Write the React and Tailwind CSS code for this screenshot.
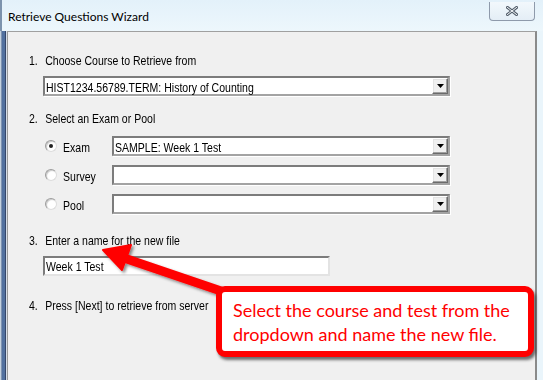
import React from "react";

const dlgFont = { fontFamily: '"Liberation Sans", Arial, sans-serif' };

function Narrow({ children, className = "" }) {
  return (
    <span
      className={"inline-block origin-left scale-x-[0.81] whitespace-nowrap text-[13px] leading-[15px] text-black " + className}
      style={dlgFont}
    >
      {children}
    </span>
  );
}

function Arrow() {
  return (
    <div className="flex h-[16px] w-[16px] shrink-0 items-center justify-center border border-t-[#ffffff] border-l-[#ffffff] border-r-[#6b6b6b] border-b-[#6b6b6b] bg-[#f0f0f0] shadow-[inset_-1px_-1px_0_#a0a0a0,inset_1px_1px_0_#e3e3e3]">
      <svg width="7" height="4" viewBox="0 0 7 4">
        <path d="M0 0H7L3.5 4Z" fill="#000" />
      </svg>
    </div>
  );
}

function Combo({ width, text }) {
  return (
    <div
      className="flex h-[20px] items-center border-2 border-t-[#7c7c7c] border-l-[#7c7c7c] border-r-[#a3a3a3] border-b-[#a3a3a3] bg-white shadow-[1px_1px_0_#ffffff]"
      style={{ width }}
    >
      <div className="min-w-0 flex-1 overflow-hidden pl-[1px]">
        <Narrow>{text}</Narrow>
      </div>
      <Arrow />
    </div>
  );
}

function Radio({ checked }) {
  return (
    <div className="flex h-[12px] w-[12px] shrink-0 items-center justify-center rounded-full border border-t-[#9c9c9c] border-l-[#9c9c9c] border-r-[#dcdcdc] border-b-[#dcdcdc] bg-white shadow-[inset_1px_1px_1px_#c8c8c8]">
      {checked && <div className="h-[4px] w-[4px] rounded-full bg-[#222]" />}
    </div>
  );
}

function Step({ n, children, className }) {
  return (
    <div className={"flex h-[14px] items-center " + className}>
      <Narrow>
        <span className="inline-block w-[20px]">{n}.</span>
        {children}
      </Narrow>
    </div>
  );
}

function RadioRow({ label, checked, text }) {
  return (
    <div className="ml-[16px] flex h-[20px] items-center">
      <Radio checked={checked} />
      <div className="ml-[6px] w-[49px]">
        <Narrow>{label}</Narrow>
      </div>
      <Combo width={338} text={text} />
    </div>
  );
}

export default function App() {
  return (
    <div className="relative flex h-[380px] w-[543px] flex-col overflow-hidden bg-[#eaf5fb]">
      {/* title bar */}
      <div className="flex h-[31px] shrink-0 items-start bg-gradient-to-b from-[#e3f1fa] to-[#edf7fc]">
        <div className="h-full w-[2px] bg-[#7d93ad]" />
        <span
          className="ml-[6px] mt-[9px] text-[12px] leading-[16px] text-black"
          style={{ fontFamily: 'Lato, "Noto Sans", sans-serif' }}
        >
          Retrieve Questions Wizard
        </span>
        <div className="ml-auto mr-[8px] mt-[2px] flex h-[19px] w-[46px] items-center justify-center rounded-b-[4px] border border-t-0 border-[#8e9aab] bg-gradient-to-b from-[#f2f8fc] to-[#e4eef6]">
          <svg width="12" height="10" viewBox="0 0 12 10">
            <path d="M1.5 1.5L10.5 8.5M10.5 1.5L1.5 8.5" stroke="#55606d" strokeWidth="3" strokeLinecap="square" />
            <path d="M1.5 1.5L10.5 8.5M10.5 1.5L1.5 8.5" stroke="#f6f9fb" strokeWidth="1" strokeLinecap="square" />
          </svg>
        </div>
      </div>

      {/* body */}
      <div className="flex min-h-0 flex-1">
        <div className="flex w-[7px] shrink-0">
          <div className="w-[1px] bg-[#c3d1df]" />
          <div className="w-[1px] bg-[#7f93b0]" />
          <div className="w-[3px] bg-[#52719f]" />
          <div className="w-[1px] bg-[#34466a]" />
          <div className="w-[1px] bg-[#d5dee8]" />
        </div>
        <div className="flex flex-1 flex-col border-l border-t border-r-2 border-l-[#9a9a9a] border-t-[#a0a0a0] border-r-[#8a8a8a] bg-[#f0f0f0] pl-[21px]">
          <Step n="1" className="mt-[21px]">Choose Course to Retrieve from</Step>
          <div className="ml-[14px] mt-[9px]">
            <Combo width={407} text="HIST1234.56789.TERM: History of Counting" />
          </div>

          <Step n="2" className="mt-[15px]">Select an Exam or Pool</Step>
          <div className="mt-[11px] flex flex-col gap-[9px]">
            <RadioRow label="Exam" checked text="SAMPLE: Week 1 Test" />
            <RadioRow label="Survey" text="" />
            <RadioRow label="Pool" text="" />
          </div>

          <Step n="3" className="mt-[19px]">Enter a name for the new file</Step>
          <div className="ml-[14px] mt-[9px] flex h-[20px] w-[287px] items-center border-2 border-t-[#7c7c7c] border-l-[#7c7c7c] border-r-[#e3e3e3] border-b-[#e3e3e3] bg-white pl-[1px]">
            <Narrow>Week 1 Test</Narrow>
          </div>

          <Step n="4" className="mt-[22px]">Press [Next] to retrieve from server</Step>
        </div>
        <div className="w-[6px] shrink-0 bg-[#eaf5fb]" />
      </div>

      {/* annotation arrow */}
      <svg className="pointer-events-none absolute left-0 top-0" width="543" height="380">
        <defs>
          <filter id="sh" x="-20%" y="-20%" width="140%" height="140%">
            <feDropShadow dx="2" dy="2" stdDeviation="1.5" floodColor="#000" floodOpacity="0.45" />
          </filter>
        </defs>
        <g filter="url(#sh)">
          <line x1="221" y1="291" x2="124" y2="258" stroke="#ff0000" strokeWidth="9" strokeLinecap="round" />
          <path d="M103 250L131 245L122 270Z" fill="#ff0000" stroke="#ff0000" strokeWidth="2" strokeLinejoin="round" />
        </g>
      </svg>

      {/* callout */}
      <div className="absolute left-[216px] top-[286px] flex h-[71px] w-[318px] flex-col justify-center rounded-[9px] border-[6px] border-[#ff0000] bg-white pl-[11px] shadow-[2px_3px_3px_rgba(0,0,0,0.55)]">
        <div
          className="whitespace-nowrap text-[18px] leading-[24px] text-[#ff0000]"
          style={{ fontFamily: 'Lato, "Open Sans", sans-serif' }}
        >
          Select the course and test from the
          <br />
          dropdown and name the new file.
        </div>
      </div>
    </div>
  );
}
